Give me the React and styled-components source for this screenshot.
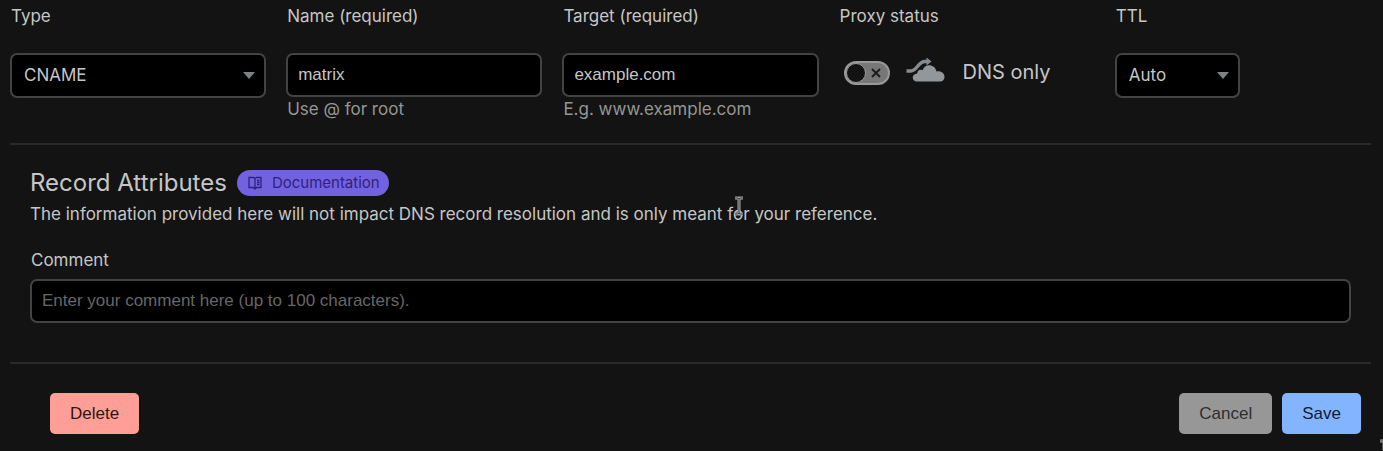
import React, { useState } from "react";
import styled, { createGlobalStyle } from "styled-components";

const GlobalStyle = createGlobalStyle`
  *, *::before, *::after {
    box-sizing: border-box;
  }

  body {
    margin: 0;
    background: #131313;
    color: #c6c6c6;
    font-family: Inter, "Liberation Sans", sans-serif;
    font-size: 17px;
    line-height: 24px;
  }
`;

const Form = styled.form`
  position: relative;
  padding: 4px 12px 16px 10px;
  overflow: hidden;
`;

const Fields = styled.div`
  display: grid;
  grid-template-columns: repeat(5, 1fr);
  column-gap: 20px;
  padding-bottom: 22px;
`;

const Field = styled.div`
  display: flex;
  flex-direction: column;
`;

const Label = styled.label`
  margin-bottom: ${({ $gap = 25 }) => $gap}px;
  padding-left: 1px;
`;

const TextInput = styled.input`
  width: 100%;
  height: 44px;
  padding: 0 10px;
  border: 2px solid #434343;
  border-radius: 7px;
  outline: none;
  background: #000;
  color: #c6c6c6;
  font-family: "Liberation Sans", Arial, sans-serif;
  font-size: 17px;

  &::placeholder {
    color: #666;
    opacity: 1;
  }
`;

const Help = styled.span`
  padding-left: 1px;
  color: #969696;
`;

const SelectBox = styled.div`
  position: relative;
  width: ${({ $width = "100%" }) => $width};
`;

const NativeSelect = styled.select`
  appearance: none;
  width: 100%;
  height: 45px;
  padding: 0 32px 2px 12px;
  border: 2px solid #434343;
  border-radius: 7px;
  outline: none;
  background: #000;
  color: #c6c6c6;
  font-family: inherit;
  font-size: 17px;
`;

const Caret = styled.svg`
  position: absolute;
  top: 19px;
  right: 11px;
  pointer-events: none;
`;

const ProxyRow = styled.div`
  display: flex;
  align-items: center;
  height: 40px;
  padding-left: 5px;
`;

const SwitchBox = styled.span`
  display: grid;
  align-items: center;
  margin-right: 16px;

  > * {
    grid-area: 1 / 1;
  }
`;

const SwitchInput = styled.input`
  appearance: none;
  display: block;
  width: 46px;
  height: 24px;
  margin: 0;
  border: 2px solid #999;
  border-radius: 12px;
  background: #777;

  &::before {
    content: "";
    display: block;
    width: 20px;
    height: 20px;
    border: 1px solid #999;
    border-radius: 50%;
    background: #131313;
  }

  &:checked {
    background: #f6821f;
  }

  &:checked::before {
    margin-left: auto;
  }
`;

const Cross = styled.svg`
  justify-self: ${({ $on }) => ($on ? "start" : "end")};
  margin: 0 9px;
  pointer-events: none;
`;

const CloudIcon = styled.svg`
  margin-bottom: 8px;
`;

const Status = styled.span`
  margin: 0 0 2px 18px;
  font-size: 20px;
`;

const Divider = styled.hr`
  height: 2px;
  margin: 0;
  border: 0;
  background: #292929;
`;

const Attributes = styled.section`
  padding: 23px 20px 39px;
`;

const TitleRow = styled.div`
  display: flex;
  align-items: center;
  gap: 10px;
`;

const Title = styled.h2`
  margin: 0;
  font-size: 24px;
  font-weight: 400;
  line-height: 30px;
`;

const DocLink = styled.a`
  display: inline-flex;
  align-items: center;
  gap: 10px;
  height: 26px;
  padding: 0 9px 0 11px;
  border-radius: 13px;
  background: #7362e0;
  color: #30217f;
  font-size: 15px;
  text-decoration: none;
`;

const Note = styled.p`
  margin: 4px 0 22px;
`;

const CommentField = styled(Field)`
  width: 100%;
`;

const Actions = styled.div`
  display: flex;
  gap: 10px;
  padding: 29px 10px 0 40px;
`;

const Button = styled.button`
  height: 41px;
  padding: 0 20px;
  border: 0;
  border-radius: 5px;
  background: ${({ $bg }) => $bg};
  color: ${({ $color }) => $color};
  font-family: "Liberation Sans", Arial, sans-serif;
  font-size: 17px;
`;

const DeleteButton = styled(Button)`
  margin-right: auto;
`;

const Pointer = styled.svg`
  position: absolute;
  top: ${({ $top }) => $top}px;
  left: ${({ $left }) => $left};
  pointer-events: none;
`;

const IBeam = ({ top, left }) => (
  <Pointer $top={top} $left={left} width="10" height="20" viewBox="0 0 10 20" aria-hidden="true">
    <path
      d="M1 2h3l1 1 1-1h3M5 3v14M1 18h3l1-1 1 1h3"
      fill="none"
      stroke="#aaa"
      strokeWidth="3"
    />
    <path
      d="M1 2h3l1 1 1-1h3M5 3v14M1 18h3l1-1 1 1h3"
      fill="none"
      stroke="#444"
      strokeWidth="1"
    />
  </Pointer>
);

const Select = ({ id, width, options }) => (
  <SelectBox $width={width}>
    <NativeSelect id={id} defaultValue={options[0]}>
      {options.map(option => (
        <option key={option}>{option}</option>
      ))}
    </NativeSelect>
    <Caret width="12" height="7" viewBox="0 0 12 7" aria-hidden="true">
      <path d="M0 0h12L6 7z" fill="#7b8386" />
    </Caret>
  </SelectBox>
);

const ProxySwitch = () => {
  const [proxied, setProxied] = useState(false);

  return (
    <ProxyRow>
      <SwitchBox>
        <SwitchInput
          id="proxy"
          type="checkbox"
          role="switch"
          checked={proxied}
          onChange={e => setProxied(e.target.checked)}
        />
        <Cross $on={proxied} width="10" height="10" viewBox="0 0 10 10" aria-hidden="true">
          <path d="M1 1l8 8M9 1L1 9" stroke="#1c1c1c" strokeWidth="2" />
        </Cross>
      </SwitchBox>
      <CloudIcon width="39" height="25" viewBox="0 0 39 25" aria-hidden="true">
        <path
          d="M.5 14h4.500c6 0 7-9.500 14-9.500h3"
          fill="none"
          stroke="#858b90"
          strokeWidth="3.500"
        />
        <path d="M20.500.5L25.500 4.500l-5 4z" fill="#858b90" />
        <path
          d="M11 24.500c-5.500 0-6-7.500.2-8 .2-3.500 3-4.500 5.300-3.200C18.500 6 29 6.500 30.500 14.500c4.500-.8 8 1.700 8 5.500 0 2.700-1.800 4.500-4.500 4.500z"
          fill="#92979b"
        />
      </CloudIcon>
      <Status>{proxied ? "Proxied" : "DNS only"}</Status>
    </ProxyRow>
  );
};

const App = () => (
  <>
    <GlobalStyle />
    <Form onSubmit={e => e.preventDefault()}>
      <Fields>
        <Field>
          <Label htmlFor="type">Type</Label>
          <Select id="type" options={["CNAME", "A", "AAAA", "MX", "TXT"]} />
        </Field>
        <Field>
          <Label htmlFor="name">Name (required)</Label>
          <TextInput id="name" defaultValue="matrix" />
          <Help>Use @ for root</Help>
        </Field>
        <Field>
          <Label htmlFor="target">Target (required)</Label>
          <TextInput id="target" defaultValue="example.com" />
          <Help>E.g. www.example.com</Help>
        </Field>
        <Field>
          <Label htmlFor="proxy">Proxy status</Label>
          <ProxySwitch />
        </Field>
        <Field>
          <Label htmlFor="ttl">TTL</Label>
          <Select id="ttl" width="125px" options={["Auto", "1 min", "5 min", "1 hr"]} />
        </Field>
      </Fields>
      <Divider />
      <Attributes>
        <TitleRow>
          <Title>Record Attributes</Title>
          <DocLink href="#documentation">
            <svg width="14" height="14" viewBox="0 0 14 14" aria-hidden="true">
              <path
                d="M1 1.500h4.500L7 2.500l1.500-1H13v10H8.500L7 13l-1.500-1.500H1zM7 2.500V13M9 4.500h2.500M9 6.500h2.500M9 8.500h2.500"
                fill="none"
                stroke="currentColor"
                strokeWidth="1.300"
              />
            </svg>
            Documentation
          </DocLink>
        </TitleRow>
        <Note>
          The information provided here will not impact DNS record resolution and is only meant for
          your reference.
        </Note>
        <CommentField>
          <Label htmlFor="comment" $gap={7}>
            Comment
          </Label>
          <TextInput
            id="comment"
            maxLength={100}
            placeholder="Enter your comment here (up to 100 characters)."
          />
        </CommentField>
      </Attributes>
      <Divider />
      <Actions>
        <DeleteButton type="button" $bg="#ff9e97" $color="#2b1716">
          Delete
        </DeleteButton>
        <Button type="button" $bg="#979797" $color="#2e2e2e">
          Cancel
        </Button>
        <Button type="submit" $bg="#82b4ff" $color="#121d30">
          Save
        </Button>
      </Actions>
      <IBeam top={196} left="734px" />
      <IBeam top={439} left="calc(100% - 4px)" />
    </Form>
  </>
);

export default App;
